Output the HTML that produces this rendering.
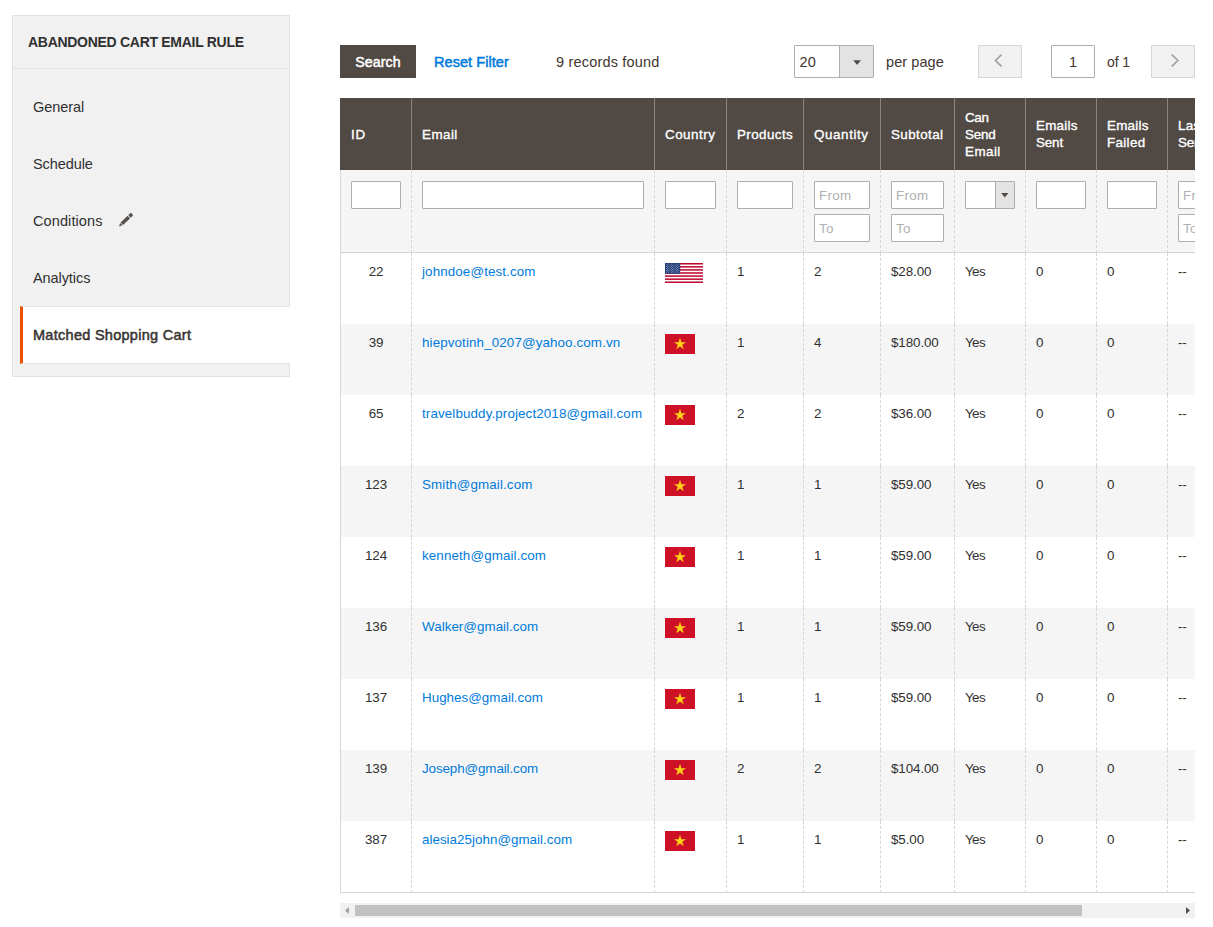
<!DOCTYPE html>
<html lang="en">
<head>
<meta charset="utf-8">
<title>Abandoned Cart Email Rule</title>
<style>
*{box-sizing:border-box;margin:0;padding:0}
html,body{width:1213px;height:927px;overflow:hidden;background:#fff}
body{font-family:"Liberation Sans",sans-serif;color:#41362f;font-size:14px;position:relative}
/* sidebar */
.side{position:absolute;left:12px;top:15px;width:278px;height:362px;background:#f1f1f1;border:1px solid #e3e3e3}
.side .ttl{position:absolute;left:0;top:0;width:276px;height:53px;border-bottom:1px solid #e3e3e3;font-weight:700;font-size:14px;line-height:52px;padding-left:15px;letter-spacing:-.29px;color:#303030}
.side .it{position:absolute;left:20px;font-size:14.5px;line-height:20px;color:#303030;letter-spacing:-.08px}
.side .act{position:absolute;left:7px;top:290px;width:270px;height:58px;background:#fff;border-left:3px solid #eb5202;border-top:1px solid #e3e3e3;border-bottom:1px solid #e3e3e3;font-weight:400;-webkit-text-stroke:.5px #303030;font-size:14.5px;line-height:56px;padding-left:10px;letter-spacing:.28px}
/* toolbar */
.btn{position:absolute;left:340px;top:45px;width:76px;height:33px;background:#514943;color:#fff;font-weight:400;-webkit-text-stroke:.5px #fff;font-size:14.2px;line-height:35px;text-align:center;letter-spacing:.08px}
.reset{position:absolute;left:434px;top:45px;line-height:35px;color:#007bdb;font-weight:400;-webkit-text-stroke:.5px #007bdb;font-size:14.5px;letter-spacing:.06px}
.found{position:absolute;left:556px;top:45px;line-height:35px;font-size:14.5px;letter-spacing:.18px}
.sel{position:absolute;left:794px;top:45px;width:80px;height:33px;border:1px solid #adadad;background:#fff;border-radius:1px}
.sel span{position:absolute;left:4.5px;top:0;line-height:33px;font-size:14.5px;letter-spacing:.3px}
.sel i{position:absolute;right:0;top:0;width:34px;height:31px;background:#e3e3e3;border-left:1px solid #adadad}
.sel i:after{content:"";position:absolute;left:13.3px;top:14.2px;width:7.6px;height:4.8px;background:#514943;clip-path:polygon(0 0,100% 0,50% 100%)}
.fs{display:block;position:relative;height:28px;width:50px;border:1px solid #adadad;background:#fff;border-radius:1px}
.fs i{position:absolute;right:0;top:0;width:19px;height:26px;background:#e3e3e3;border-left:1px solid #adadad}
.fs i:after{content:"";position:absolute;left:5px;top:10.8px;width:7.6px;height:4.8px;background:#514943;clip-path:polygon(0 0,100% 0,50% 100%)}
.pp{position:absolute;left:886px;top:45px;line-height:35px;font-size:14.5px;letter-spacing:.08px}
.nav{position:absolute;top:45px;width:44px;height:33px;background:#f1f1f1;border:1px solid #d6d6d6}
.nav svg{display:block}
.pg{position:absolute;left:1051px;top:45px;width:44px;height:33px;border:1px solid #adadad;background:#fff;text-align:center;line-height:33px;font-size:14.5px;border-radius:1px}
.of{position:absolute;left:1107px;top:45px;line-height:35px;font-size:14px;letter-spacing:-.1px}
/* grid */
.wrap{position:absolute;left:340px;top:98px;width:855px;height:800px;overflow:hidden}
table{border-collapse:separate;border-spacing:0;table-layout:fixed;width:939px}
th{background:#514943;color:#fff;font-weight:400;-webkit-text-stroke:.35px #fff;font-size:13.4px;line-height:17px;text-align:left;padding:0 10px;height:72px;border-left:1px solid #8a837f;vertical-align:middle;letter-spacing:.45px}
th:first-child{border-left:1px solid #514943}
td{font-size:13.4px;line-height:18px;padding:10px 10px 0;height:71px;vertical-align:top;border-left:1px dashed #d6d6d6;color:#303030;letter-spacing:-.1px;white-space:nowrap}
td:first-child{border-left:1px solid #d6d6d6}
tr.f td{background:#f5f5f5;height:83px;border-bottom:1px solid #d6d6d6;padding-top:11px}
tr.e td{background:#f5f5f5}
tr:last-child td{border-bottom:1px solid #d6d6d6;height:72px}
td a{color:#007bdb;text-decoration:none;letter-spacing:.11px}
.in{display:block;height:28px;border:1px solid #adadad;background:#fff;border-radius:1px;font-size:13.4px;line-height:28px;color:#b0b0b0;padding-left:4px;margin-bottom:5px;width:100%;letter-spacing:.3px;overflow:hidden}
.c{text-align:center}
.fl{display:block;margin-top:0}
.sb{position:absolute;left:340px;top:903px;width:855px;height:15px;background:#f1f1f1}
.sb b{position:absolute;left:15px;top:2px;width:727px;height:11px;background:#c1c1c1}
.sb svg{position:absolute;left:0;top:0}
</style>
</head>
<body>
<div class="side">
  <div class="ttl">ABANDONED CART EMAIL RULE</div>
  <div class="it" style="top:81px">General</div>
  <div class="it" style="top:138px">Schedule</div>
  <div class="it" style="top:195px;letter-spacing:.1px">Conditions</div>
  <svg style="position:absolute;left:100px;top:190px" width="30" height="30" viewBox="0 0 30 30"><g transform="translate(6,20.4) rotate(-43.5)" fill="#58514c"><polygon points="0,0 3.2,-1.6 3.2,1.6"/><rect x="3.9" y="-1.75" width="9.6" height="3.5"/><rect x="14.4" y="-1.75" width="3.6" height="3.5" rx=".5"/></g></svg>
  <div class="it" style="top:252px">Analytics</div>
  <div class="act">Matched Shopping Cart</div>
</div>
<div class="btn">Search</div>
<div class="reset">Reset Filter</div>
<div class="found">9 records found</div>
<div class="sel"><span>20</span><i></i></div>
<div class="pp">per page</div>
<div class="nav" style="left:978px"><svg width="42" height="31" viewBox="0 0 42 31"><path d="M22.6 8.6 L16.4 14.5 L22.6 20.4" fill="none" stroke="#a39e9a" stroke-width="1.6"/></svg></div>
<div class="pg">1</div>
<div class="of">of 1</div>
<div class="nav" style="left:1151px"><svg width="42" height="31" viewBox="0 0 42 31"><path d="M19.7 8.6 L25.9 14.5 L19.7 20.4" fill="none" stroke="#a39e9a" stroke-width="1.6"/></svg></div>
<div class="wrap">
<table>
<colgroup><col style="width:71px"><col style="width:243px"><col style="width:72px"><col style="width:77px"><col style="width:77px"><col style="width:74px"><col style="width:71px"><col style="width:71px"><col style="width:71px"><col style="width:112px"></colgroup>
<tr><th><span style="letter-spacing:0.8px">ID</span></th><th><span style="letter-spacing:0.45px">Email</span></th><th><span style="letter-spacing:0.5px">Country</span></th><th><span style="letter-spacing:0.41px">Products</span></th><th><span style="letter-spacing:0.6px">Quantity</span></th><th><span style="letter-spacing:0.41px">Subtotal</span></th><th><span style="letter-spacing:-0.3px">Can</span><br><span style="letter-spacing:-0.2px">Send</span><br><span style="letter-spacing:0.45px">Email</span></th><th><span style="letter-spacing:0.24px">Emails</span><br><span style="letter-spacing:-0.13px">Sent</span></th><th><span style="letter-spacing:0.24px">Emails</span><br><span style="letter-spacing:0.34px">Failed</span></th><th><span style="letter-spacing:0.2px">Last</span><br><span style="letter-spacing:-0.13px">Sent</span></th></tr>
<tr class="f"><td><span class="in"></span></td><td><span class="in"></span></td><td><span class="in"></span></td><td><span class="in"></span></td><td><span class="in">From</span><span class="in">To</span></td><td><span class="in">From</span><span class="in">To</span></td><td><span class="fs"><i></i></span></td><td><span class="in"></span></td><td><span class="in"></span></td><td><span class="in">From</span><span class="in">To</span></td></tr>
<tr><td class="c">22</td><td><a>johndoe@test.com</a></td><td><svg class="fl" width="38" height="20" viewBox="0 0 38 20"><rect width="38" height="20" fill="#fff"/><g fill="#bf0a30"><rect y="0" width="38" height="1.54"/><rect y="3.08" width="38" height="1.54"/><rect y="6.15" width="38" height="1.54"/><rect y="9.23" width="38" height="1.54"/><rect y="12.31" width="38" height="1.54"/><rect y="15.38" width="38" height="1.54"/><rect y="18.46" width="38" height="1.54"/></g><rect width="15.2" height="10.77" fill="#1e3a78"/><g fill="#fff"><circle cx="1.27" cy="1.08" r=".42"/><circle cx="3.80" cy="1.08" r=".42"/><circle cx="6.33" cy="1.08" r=".42"/><circle cx="8.87" cy="1.08" r=".42"/><circle cx="11.40" cy="1.08" r=".42"/><circle cx="13.93" cy="1.08" r=".42"/><circle cx="2.53" cy="2.15" r=".42"/><circle cx="5.07" cy="2.15" r=".42"/><circle cx="7.60" cy="2.15" r=".42"/><circle cx="10.13" cy="2.15" r=".42"/><circle cx="12.67" cy="2.15" r=".42"/><circle cx="1.27" cy="3.23" r=".42"/><circle cx="3.80" cy="3.23" r=".42"/><circle cx="6.33" cy="3.23" r=".42"/><circle cx="8.87" cy="3.23" r=".42"/><circle cx="11.40" cy="3.23" r=".42"/><circle cx="13.93" cy="3.23" r=".42"/><circle cx="2.53" cy="4.31" r=".42"/><circle cx="5.07" cy="4.31" r=".42"/><circle cx="7.60" cy="4.31" r=".42"/><circle cx="10.13" cy="4.31" r=".42"/><circle cx="12.67" cy="4.31" r=".42"/><circle cx="1.27" cy="5.38" r=".42"/><circle cx="3.80" cy="5.38" r=".42"/><circle cx="6.33" cy="5.38" r=".42"/><circle cx="8.87" cy="5.38" r=".42"/><circle cx="11.40" cy="5.38" r=".42"/><circle cx="13.93" cy="5.38" r=".42"/><circle cx="2.53" cy="6.46" r=".42"/><circle cx="5.07" cy="6.46" r=".42"/><circle cx="7.60" cy="6.46" r=".42"/><circle cx="10.13" cy="6.46" r=".42"/><circle cx="12.67" cy="6.46" r=".42"/><circle cx="1.27" cy="7.54" r=".42"/><circle cx="3.80" cy="7.54" r=".42"/><circle cx="6.33" cy="7.54" r=".42"/><circle cx="8.87" cy="7.54" r=".42"/><circle cx="11.40" cy="7.54" r=".42"/><circle cx="13.93" cy="7.54" r=".42"/><circle cx="2.53" cy="8.62" r=".42"/><circle cx="5.07" cy="8.62" r=".42"/><circle cx="7.60" cy="8.62" r=".42"/><circle cx="10.13" cy="8.62" r=".42"/><circle cx="12.67" cy="8.62" r=".42"/><circle cx="1.27" cy="9.69" r=".42"/><circle cx="3.80" cy="9.69" r=".42"/><circle cx="6.33" cy="9.69" r=".42"/><circle cx="8.87" cy="9.69" r=".42"/><circle cx="11.40" cy="9.69" r=".42"/><circle cx="13.93" cy="9.69" r=".42"/></g></svg></td><td>1</td><td>2</td><td>$28.00</td><td style="letter-spacing:-.6px">Yes</td><td>0</td><td>0</td><td>--</td></tr>
<tr class="e"><td class="c">39</td><td><a>hiepvotinh_0207@yahoo.com.vn</a></td><td><svg class="fl" width="30" height="20" viewBox="0 0 30 20"><rect width="30" height="20" fill="#ce1126"/><polygon fill="#fcd116" points="15.00,3.80 16.41,8.15 20.99,8.15 17.29,10.84 18.70,15.20 15.00,12.51 11.30,15.20 12.71,10.84 9.01,8.15 13.59,8.15"/></svg></td><td>1</td><td>4</td><td>$180.00</td><td style="letter-spacing:-.6px">Yes</td><td>0</td><td>0</td><td>--</td></tr>
<tr><td class="c">65</td><td><a>travelbuddy.project2018@gmail.com</a></td><td><svg class="fl" width="30" height="20" viewBox="0 0 30 20"><rect width="30" height="20" fill="#ce1126"/><polygon fill="#fcd116" points="15.00,3.80 16.41,8.15 20.99,8.15 17.29,10.84 18.70,15.20 15.00,12.51 11.30,15.20 12.71,10.84 9.01,8.15 13.59,8.15"/></svg></td><td>2</td><td>2</td><td>$36.00</td><td style="letter-spacing:-.6px">Yes</td><td>0</td><td>0</td><td>--</td></tr>
<tr class="e"><td class="c">123</td><td><a>Smith@gmail.com</a></td><td><svg class="fl" width="30" height="20" viewBox="0 0 30 20"><rect width="30" height="20" fill="#ce1126"/><polygon fill="#fcd116" points="15.00,3.80 16.41,8.15 20.99,8.15 17.29,10.84 18.70,15.20 15.00,12.51 11.30,15.20 12.71,10.84 9.01,8.15 13.59,8.15"/></svg></td><td>1</td><td>1</td><td>$59.00</td><td style="letter-spacing:-.6px">Yes</td><td>0</td><td>0</td><td>--</td></tr>
<tr><td class="c">124</td><td><a>kenneth@gmail.com</a></td><td><svg class="fl" width="30" height="20" viewBox="0 0 30 20"><rect width="30" height="20" fill="#ce1126"/><polygon fill="#fcd116" points="15.00,3.80 16.41,8.15 20.99,8.15 17.29,10.84 18.70,15.20 15.00,12.51 11.30,15.20 12.71,10.84 9.01,8.15 13.59,8.15"/></svg></td><td>1</td><td>1</td><td>$59.00</td><td style="letter-spacing:-.6px">Yes</td><td>0</td><td>0</td><td>--</td></tr>
<tr class="e"><td class="c">136</td><td><a style="letter-spacing:.03px">Walker@gmail.com</a></td><td><svg class="fl" width="30" height="20" viewBox="0 0 30 20"><rect width="30" height="20" fill="#ce1126"/><polygon fill="#fcd116" points="15.00,3.80 16.41,8.15 20.99,8.15 17.29,10.84 18.70,15.20 15.00,12.51 11.30,15.20 12.71,10.84 9.01,8.15 13.59,8.15"/></svg></td><td>1</td><td>1</td><td>$59.00</td><td style="letter-spacing:-.6px">Yes</td><td>0</td><td>0</td><td>--</td></tr>
<tr><td class="c">137</td><td><a style="letter-spacing:.01px">Hughes@gmail.com</a></td><td><svg class="fl" width="30" height="20" viewBox="0 0 30 20"><rect width="30" height="20" fill="#ce1126"/><polygon fill="#fcd116" points="15.00,3.80 16.41,8.15 20.99,8.15 17.29,10.84 18.70,15.20 15.00,12.51 11.30,15.20 12.71,10.84 9.01,8.15 13.59,8.15"/></svg></td><td>1</td><td>1</td><td>$59.00</td><td style="letter-spacing:-.6px">Yes</td><td>0</td><td>0</td><td>--</td></tr>
<tr class="e"><td class="c">139</td><td><a style="letter-spacing:-.11px">Joseph@gmail.com</a></td><td><svg class="fl" width="30" height="20" viewBox="0 0 30 20"><rect width="30" height="20" fill="#ce1126"/><polygon fill="#fcd116" points="15.00,3.80 16.41,8.15 20.99,8.15 17.29,10.84 18.70,15.20 15.00,12.51 11.30,15.20 12.71,10.84 9.01,8.15 13.59,8.15"/></svg></td><td>2</td><td>2</td><td>$104.00</td><td style="letter-spacing:-.6px">Yes</td><td>0</td><td>0</td><td>--</td></tr>
<tr><td class="c">387</td><td><a style="letter-spacing:.015px">alesia25john@gmail.com</a></td><td><svg class="fl" width="30" height="20" viewBox="0 0 30 20"><rect width="30" height="20" fill="#ce1126"/><polygon fill="#fcd116" points="15.00,3.80 16.41,8.15 20.99,8.15 17.29,10.84 18.70,15.20 15.00,12.51 11.30,15.20 12.71,10.84 9.01,8.15 13.59,8.15"/></svg></td><td>1</td><td>1</td><td>$5.00</td><td style="letter-spacing:-.6px">Yes</td><td>0</td><td>0</td><td>--</td></tr>
</table>
</div>
<div class="sb"><b></b><svg width="855" height="15" viewBox="0 0 855 15"><polygon points="5,7.5 9,4 9,11" fill="#a3a3a3"/><polygon points="850,7.5 846,4 846,11" fill="#505050"/></svg></div>
</body>
</html>
